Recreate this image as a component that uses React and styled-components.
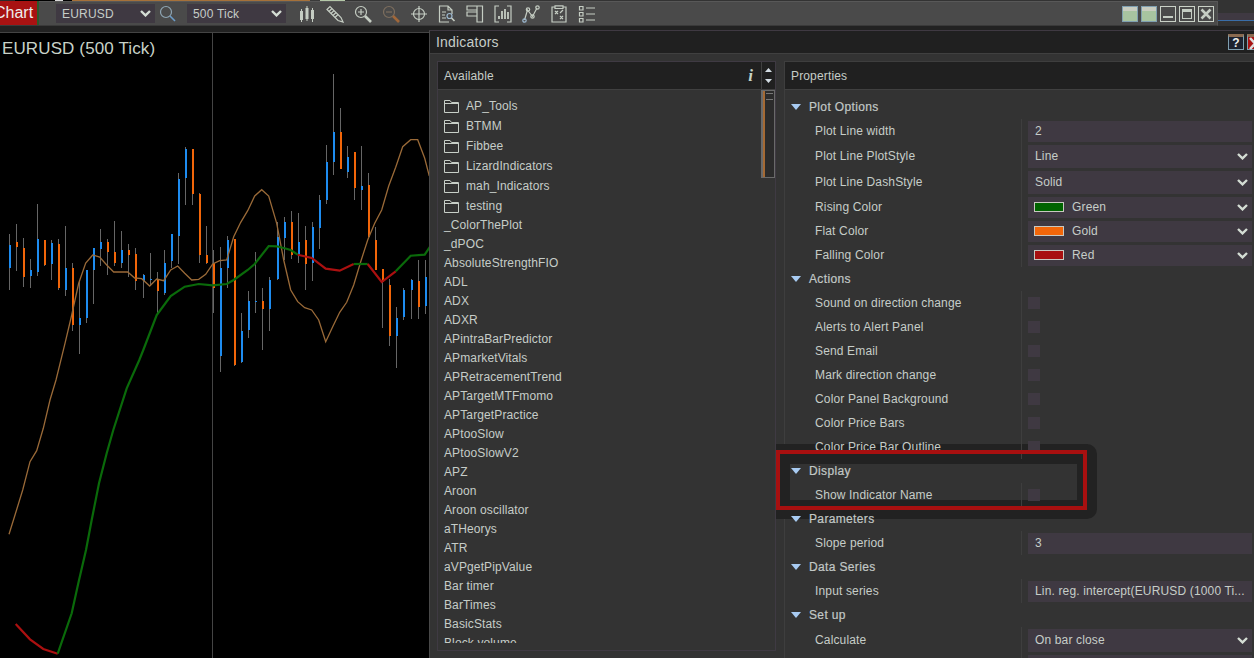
import React from 'react';
import styled, { createGlobalStyle } from 'styled-components';

const GlobalStyle = createGlobalStyle`
  html, body {
    margin: 0;
    padding: 0;
    height: 100%;
    background: #000;
    overflow: hidden;
  }
  body, button {
    font-family: 'Liberation Sans', Arial, sans-serif;
  }
`;

const TEXT = '#c6cdc8';
const FIELD = '#3f3942';
const LINE = '#3e3e3e';
const ICON = '#c5cdc3';

// numbers below were read off a 3x crop, so x is px*3 and y is (px-80)*3
const px = ([x, y]) => `${(x / 3).toFixed(1)},${(80 + y / 3).toFixed(1)}`;
const pts = list => list.map(px).join(' ');

const BLUE = '#1e8cf0';
const ORANGE = '#f26609';

const bars = [
  [26, 462, 630, 495, 564, BLUE],
  [47, 432, 573, 486, 501, ORANGE],
  [68, 474, 621, 504, 591, ORANGE],
  [89, 537, 624, 570, 588, BLUE],
  [110, 372, 588, 477, 576, BLUE],
  [131, 480, 558, 480, 555, ORANGE],
  [152, 480, 600, 489, 552, BLUE],
  [173, 477, 630, 492, 624, ORANGE],
  [194, 438, 648, 564, 630, BLUE],
  [215, 549, 753, 564, 735, ORANGE],
  [236, 600, 822, 714, 735, BLUE],
  [257, 570, 729, 570, 714, BLUE],
  [278, 504, 672, 504, 570, BLUE],
  [299, 447, 558, 486, 507, BLUE],
  [320, 477, 585, 486, 516, ORANGE],
  [341, 423, 558, 516, 549, ORANGE],
  [362, 453, 564, 510, 549, BLUE],
  [383, 492, 591, 510, 525, ORANGE],
  [404, 504, 630, 522, 603, ORANGE],
  [428, 582, 654, 585, 603, BLUE],
  [449, 519, 618, 597, 600, BLUE],
  [470, 576, 702, 597, 633, ORANGE],
  [491, 510, 645, 549, 639, BLUE],
  [512, 462, 564, 462, 543, BLUE],
  [533, 279, 552, 297, 468, BLUE],
  [554, 201, 375, 207, 294, BLUE],
  [575, 207, 375, 207, 342, ORANGE],
  [596, 339, 549, 342, 525, ORANGE],
  [617, 438, 552, 525, 549, ORANGE],
  [638, 510, 699, 549, 624, ORANGE],
  [659, 501, 876, 564, 828, BLUE],
  [680, 468, 624, 480, 564, BLUE],
  [701, 477, 858, 477, 855, ORANGE],
  [722, 699, 849, 753, 846, BLUE],
  [743, 633, 774, 663, 750, BLUE],
  [764, 516, 699, 663, 666, BLUE],
  [785, 624, 810, 663, 687, ORANGE],
  [806, 591, 753, 600, 687, BLUE],
  [830, 426, 600, 471, 597, BLUE],
  [851, 411, 540, 426, 474, BLUE],
  [872, 393, 537, 426, 525, ORANGE],
  [893, 399, 549, 486, 525, BLUE],
  [914, 438, 630, 480, 552, ORANGE],
  [935, 426, 603, 441, 549, BLUE],
  [956, 345, 507, 360, 444, BLUE],
  [977, 195, 372, 246, 360, BLUE],
  [998, -18, 285, 156, 246, BLUE],
  [1019, 84, 267, 156, 267, ORANGE],
  [1040, 198, 294, 231, 276, BLUE],
  [1061, 216, 360, 216, 324, ORANGE],
  [1082, 198, 390, 318, 330, BLUE],
  [1103, 279, 471, 315, 471, ORANGE],
  [1124, 441, 570, 480, 570, ORANGE],
  [1145, 570, 744, 567, 606, ORANGE],
  [1166, 597, 798, 615, 768, ORANGE],
  [1187, 681, 864, 714, 768, BLUE],
  [1208, 624, 720, 630, 711, BLUE],
  [1232, 597, 717, 600, 630, BLUE],
  [1253, 540, 717, 603, 681, ORANGE],
  [1274, 540, 702, 591, 678, BLUE],
];

const slowLine = [
  [27, 1363], [45, 1305], [68, 1230], [90, 1145], [110, 1112], [130, 1045],
  [150, 960], [168, 900], [195, 790], [215, 705], [236, 610], [257, 549],
  [278, 525], [299, 531], [320, 555], [341, 576], [383, 576], [404, 594],
  [425, 596], [449, 618], [470, 597], [491, 602], [512, 570], [533, 558],
  [554, 580], [575, 600], [596, 598], [617, 583], [638, 552], [659, 542],
  [680, 540], [701, 470], [722, 427], [743, 392], [764, 348], [785, 329],
  [806, 348], [830, 430], [851, 540], [872, 630], [893, 665], [914, 683],
  [935, 690], [956, 720], [977, 785], [998, 740], [1019, 697], [1040, 667],
  [1061, 615], [1082, 545], [1103, 480], [1124, 430], [1145, 390], [1166, 318],
  [1187, 262], [1208, 200], [1232, 179], [1253, 179], [1274, 235], [1288, 288],
];

const RED_LINE = '#ab1010';
const GREEN_LINE = '#0a6a0a';

const slopeSegments = [
  [RED_LINE, [[47, 1632], [90, 1678], [130, 1707], [173, 1721]]],
  [GREEN_LINE, [
    [173, 1721], [215, 1600], [235, 1510], [258, 1410], [275, 1320], [297, 1210],
    [320, 1120], [340, 1050], [380, 925], [418, 840], [430, 810], [470, 705],
    [512, 648], [554, 620], [596, 612], [638, 616], [680, 612], [701, 600],
    [743, 570], [764, 552], [806, 498], [830, 499], [851, 504], [872, 510], [893, 524],
  ]],
  [RED_LINE, [[893, 524], [935, 534], [977, 566], [1019, 572], [1061, 552]]],
  [GREEN_LINE, [[1061, 552], [1103, 552]]],
  [RED_LINE, [[1103, 552], [1145, 606], [1187, 574]]],
  [GREEN_LINE, [[1187, 574], [1232, 527], [1274, 524], [1290, 500]]],
];

const Page = styled.div`
  width: 1254px;
  height: 658px;
  overflow: hidden;
  position: relative;
  display: flex;
  flex-direction: column;
  background: #000;
`;

const TopStrip = styled.div`
  height: 1px;
  flex: none;
  background: linear-gradient(
    to right,
    #2a2a2a 0 15px,
    #000 15px 55px,
    #d8d8d8 55px 63px,
    #000 63px 72px,
    #a5713a 72px 310px,
    #3a3a3a 310px 320px,
    #b4c8a8 320px 345px,
    #333 345px
  );
`;

const Header = styled.div`
  display: flex;
  height: 25px;
  flex: none;
`;

const Toolbar = styled.div`
  width: 1218px;
  flex: none;
  box-sizing: border-box;
  display: flex;
  align-items: center;
  padding-right: 3px;
  background: #4a4a4a;
  border-top: 1px solid #585858;
  border-bottom: 1px solid #3a3a3a;
  border-right: 1px solid #555;
`;

const HeaderStub = styled.div`
  flex: 1;
  background: #333;
  padding-top: 12px;
`;

const StubBand = styled.div`
  height: 7px;
  background: ${FIELD};
  border-bottom: 1px solid #3a6ea8;
`;

const ChartTab = styled.div`
  width: 37px;
  height: 24px;
  margin-top: -1px;
  flex: none;
  overflow: hidden;
  background: #a81212;
  color: #eee;
  font-size: 16px;
  line-height: 24px;
  text-indent: -6px;
  white-space: nowrap;
  border-right: 2px solid #2a5a2a;
`;

const ToolSelect = styled.div`
  width: 99px;
  height: 19px;
  flex: none;
  box-sizing: border-box;
  display: flex;
  align-items: center;
  justify-content: space-between;
  margin-left: ${p => p.$ml || 0}px;
  padding: 0 4px 0 6px;
  background: ${FIELD};
  color: ${TEXT};
  font-size: 12px;
  letter-spacing: 0.2px;
`;

const SearchBox = styled.svg`
  width: 18px;
  height: 18px;
  flex: none;
  margin-left: 4px;
`;

const ToolIcons = styled.div`
  display: flex;
  gap: 10px;
  margin-left: 12px;
`;

const ToolIcon = styled.svg`
  width: 18px;
  height: 18px;
  display: block;
  fill: none;
  stroke: ${p => p.$dim ? '#7d6e5e' : ICON};
  stroke-width: 1.2;
`;

const WindowButtons = styled.div`
  display: flex;
  gap: 3px;
  margin-left: auto;
`;

const WindowButton = styled.div`
  width: 16px;
  height: 16px;
  box-sizing: border-box;
  border: 1px solid ${p => p.$filled ? '#7f9fb0' : '#c9d0c6'};
  background: ${p => p.$filled
    ? 'linear-gradient(to bottom, #c9cdc0 0 4px, #a8c4a0 4px)'
    : '#4a4a4a'};
  display: flex;
  align-items: center;
  justify-content: center;
`;

const Main = styled.div`
  flex: 1;
  min-height: 0;
  display: grid;
  grid-template-columns: 429px 1fr;
`;

const Strip = styled.div`
  height: 4px;
  flex: none;
  background: #222;
`;

const ChartPane = styled.div`
  position: relative;
  background: #000;
  border-top: 2px solid #222;
`;

const ChartTitle = styled.div`
  position: absolute;
  left: 2px;
  top: 7px;
  color: #c8d3c8;
  font-size: 17px;
  line-height: 20px;
  letter-spacing: 0.12px;
  white-space: nowrap;
`;

const ChartSvg = styled.svg`
  display: block;
  width: 429px;
  height: 626px;
`;

const Dialog = styled.div`
  display: flex;
  flex-direction: column;
  min-width: 0;
  background: #333;
  border-left: 1px solid #484848;
  border-top: 1px solid ${FIELD};
  overflow: hidden;
`;

const TitleBar = styled.div`
  height: 22px;
  flex: none;
  display: flex;
  align-items: center;
  justify-content: space-between;
  padding-left: 6px;
  background: #202020;
  border-bottom: 1px solid #404040;
  color: ${TEXT};
  font-size: 14px;
  letter-spacing: 0.2px;
`;

const TitleButtons = styled.div`
  display: flex;
  gap: 3px;
  margin-right: -9px;
`;

const TitleButton = styled.div`
  width: 16px;
  height: 16px;
  box-sizing: border-box;
  border: 1px solid #7f9fb0;
  border-top: 3px solid #8a6a50;
  background: ${p => p.$close ? '#a81212' : '#1c2230'};
  color: #eee;
  font-size: 12px;
  font-weight: bold;
  line-height: 12px;
  letter-spacing: 0;
  text-align: center;
`;

const Columns = styled.div`
  flex: 1;
  min-height: 0;
  display: grid;
  grid-template-columns: 339px 1fr;
  gap: 8px;
  align-items: start;
  padding: 7px 0 0 7px;
`;

const Panel = styled.div`
  height: ${p => p.$h}px;
  box-sizing: border-box;
  overflow: hidden;
  display: flex;
  flex-direction: column;
  border: 1px solid ${LINE};
  border-right-width: ${p => p.$open ? 0 : 1}px;
  border-color: ${p => p.$open ? LINE : '#3f3a43'};
`;

const PanelHead = styled.div`
  height: 27px;
  flex: none;
  box-sizing: content-box;
  display: flex;
  align-items: stretch;
  background: #202020;
  border-bottom: 1px solid #404040;
  color: ${TEXT};
  font-size: 12px;
  letter-spacing: 0.15px;
`;

const HeadLabel = styled.div`
  flex: 1;
  display: flex;
  align-items: center;
  justify-content: space-between;
  padding: 0 8px 0 6px;
`;

const InfoMark = styled.span`
  font-family: 'Liberation Serif', serif;
  font-style: italic;
  font-weight: bold;
  font-size: 17px;
  color: #c6d4c6;
`;

const ScrollArrows = styled.div`
  width: 13px;
  flex: none;
  display: flex;
  flex-direction: column;
  align-items: center;
  justify-content: space-between;
  padding: 6px 0;
  border-left: 1px solid #404040;
`;

const Arrow = styled.svg`
  width: 7px;
  height: 4px;
  display: block;
  fill: #d4dde4;
`;

const ListWrap = styled.div`
  flex: 1;
  display: flex;
  min-height: 0;
`;

const List = styled.div`
  flex: 1;
  height: 553px;
  overflow: hidden;
  padding: 6px 0 0 6px;
  box-sizing: border-box;
  margin-bottom: 6px;
  color: ${TEXT};
  font-size: 12px;
  letter-spacing: 0.12px;
`;

const FolderRow = styled.div`
  height: 20px;
  display: flex;
  align-items: center;
  gap: 7px;
  white-space: nowrap;
`;

const ItemRow = styled.div`
  height: 19px;
  line-height: 19px;
  white-space: nowrap;
`;

const FolderIcon = styled.svg`
  width: 15px;
  height: 13px;
  flex: none;
  fill: none;
  stroke: #c8cfc8;
  stroke-width: 1;
`;

const ScrollTrack = styled.div`
  width: 14px;
  flex: none;
`;

const ScrollThumb = styled.div`
  height: 88px;
  box-sizing: border-box;
  position: relative;
  border: 1px solid #6a6a6a;
  border-left-width: 2px;
  background: #2b2b2b;

  &::before {
    content: '';
    position: absolute;
    left: 0;
    top: 0;
    bottom: 0;
    width: 2px;
    background: #a56a34;
  }
  &::after {
    content: '';
    position: absolute;
    left: 3px;
    right: 1px;
    top: 2px;
    height: 5px;
    border-top: 1px solid #777;
    border-bottom: 1px solid #777;
  }
`;

const PropBody = styled.div`
  flex: 1;
  padding-top: 5px;
  color: ${TEXT};
  font-size: 12px;
  letter-spacing: 0.15px;
`;

const SectionRow = styled.div`
  position: relative;
  z-index: 2;
  height: 24px;
  display: flex;
  align-items: center;
  gap: 8px;
  padding-left: 6px;
  letter-spacing: 0.35px;
  -webkit-text-stroke: 0.2px #c2c8c6;
  color: #c2c8c6;
`;

const SectionArrow = styled.svg`
  width: 10px;
  height: 6px;
  flex: none;
  fill: #a8cbf2;
`;

const Row = styled.div`
  position: relative;
  z-index: 2;
  height: ${p => p.$h || 24}px;
  display: grid;
  grid-template-columns: 236px 1fr;
`;

const NameCell = styled.div`
  display: flex;
  align-items: center;
  padding-left: 30px;
  white-space: nowrap;
`;

const ValueCell = styled.div`
  display: flex;
  align-items: center;
  padding: 0 2px 0 6px;
  border-left: 1px solid ${LINE};
`;

const Field = styled.div`
  flex: 1;
  min-width: 0;
  height: ${p => p.$h || 21}px;
  box-sizing: border-box;
  display: flex;
  align-items: center;
  justify-content: space-between;
  padding: 0 4px 0 7px;
  background: ${FIELD};
  white-space: nowrap;
`;

const FieldLabel = styled.span`
  display: flex;
  align-items: center;
  gap: 8px;
`;

const Swatch = styled.span`
  width: 30px;
  height: 10px;
  margin-left: -1px;
  box-sizing: border-box;
  border: 1px solid #c8c8c0;
  background: ${p => p.$color};
`;

const CheckBox = styled.div`
  width: 12px;
  height: 12px;
  background: ${FIELD};
`;

const ChevronSvg = styled.svg`
  width: 11px;
  height: 7px;
  flex: none;
  fill: none;
  stroke: #d4ddd4;
  stroke-width: 2.4;
`;

// the dark glow of the annotation sits behind the property texts, its red frame in front
const Halo = styled.div`
  position: absolute;
  z-index: 1;
  left: 776px;
  top: 444px;
  width: 321px;
  height: 75px;
  box-sizing: border-box;
  border-style: solid;
  border-color: #222;
  border-width: 20px 20px 19px 14px;
  border-radius: 0 10px 10px 0;
  pointer-events: none;
`;

const Highlight = styled.div`
  position: absolute;
  z-index: 3;
  left: 776px;
  top: 450px;
  width: 311px;
  height: 60px;
  box-sizing: border-box;
  border: 4px solid #a81010;
  pointer-events: none;
`;

const Chevron = () => (
  <ChevronSvg viewBox="0 0 11 7">
    <polyline points="1,1 5.5,5.4 10,1" />
  </ChevronSvg>
);

const Folder = () => (
  <FolderIcon viewBox="0 0 15 13">
    <path d="M0.5 12.5V0.5H6L7.5 2.5H14.5V12.5ZM0.5 3.5H14.5" />
  </FolderIcon>
);

const toolIcons = [
  <ToolIcon key="bars" viewBox="0 0 18 18">
    <g fill={ICON} stroke="none">
      <rect x="2" y="6" width="3" height="9" />
      <rect x="3" y="4" width="1" height="13" />
      <rect x="7.5" y="3" width="3" height="11" />
      <rect x="8.5" y="1" width="1" height="15" />
      <rect x="13" y="5" width="3" height="9" />
      <rect x="14" y="3" width="1" height="14" />
    </g>
  </ToolIcon>,
  <ToolIcon key="pencil" viewBox="0 0 18 18">
    <path d="M1 4.5 4 1.5 15 12.5 17 17 12 15.5Z" />
    <path d="M3 6.5 6 3.5M5 8.5 8 5.5M7 10.5 10 7.5M9 12.5 12 9.5" />
  </ToolIcon>,
  <ToolIcon key="zoom-in" viewBox="0 0 18 18">
    <circle cx="7" cy="7" r="5.5" />
    <path d="M4 7H10M7 4V10" />
    <path d="M11 11 17 17" strokeWidth="2.6" />
  </ToolIcon>,
  <ToolIcon key="zoom-out" viewBox="0 0 18 18" $dim>
    <circle cx="7" cy="7" r="5.5" />
    <path d="M4 7H10" />
    <path d="M11 11 17 17" strokeWidth="2.6" stroke="#a0673a" />
  </ToolIcon>,
  <ToolIcon key="cross" viewBox="0 0 18 18">
    <circle cx="9" cy="9" r="5.5" />
    <path d="M9 1V17M1 9H17" />
  </ToolIcon>,
  <ToolIcon key="report" viewBox="0 0 18 18">
    <path d="M11 17H1.5V1H10L14 5V9M10 1V5H14" />
    <path d="M4 7H8M4 10H7M4 13H8" />
    <circle cx="11.5" cy="11" r="2.5" stroke="#9cb8d0" />
    <path d="M13.5 13 16.5 16" strokeWidth="1.6" />
  </ToolIcon>,
  <ToolIcon key="panels" viewBox="0 0 18 18">
    <path d="M11 1H16.5V17H11ZM1 1H11V5H1ZM1 7H11V11H1Z" />
  </ToolIcon>,
  <ToolIcon key="bracket" viewBox="0 0 18 18">
    <path d="M5 1H1V17H5M13 1H17V17H13" />
    <path d="M5 11V14M8 6V14M11 4V14M14 7V14" strokeWidth="1.8" />
  </ToolIcon>,
  <ToolIcon key="nodes" viewBox="0 0 18 18">
    <path d="M2.5 15 5.5 5 10.5 11.5 15 3" />
    <circle cx="2.5" cy="15.5" r="1.7" stroke="#9cb8d0" />
    <circle cx="6" cy="4.5" r="1.7" />
    <circle cx="10.5" cy="11.5" r="1.7" />
    <circle cx="15.5" cy="2.5" r="1.7" />
  </ToolIcon>,
  <ToolIcon key="clip" viewBox="0 0 18 18">
    <path d="M5 2H2V17H16V2H13M5 0.8H13V3.5H5Z" />
    <path d="M5 6 8 9M8 6 5 9M10 11 13 14M13 11 10 14M10 8 13 5" />
  </ToolIcon>,
  <ToolIcon key="list" viewBox="0 0 18 18">
    <path d="M1.5 1.5H5V5H1.5ZM1.5 7.5H5V11H1.5ZM1.5 13.5H5V17H1.5ZM8 3H17M8 9H17M8 15H17" />
  </ToolIcon>,
];

const folders = ['AP_Tools', 'BTMM', 'Fibbee', 'LizardIndicators', 'mah_Indicators', 'testing'];

const indicators = [
  '_ColorThePlot', '_dPOC', 'AbsoluteStrengthFIO', 'ADL', 'ADX', 'ADXR',
  'APintraBarPredictor', 'APmarketVitals', 'APRetracementTrend', 'APTargetMTFmomo',
  'APTargetPractice', 'APtooSlow', 'APtooSlowV2', 'APZ', 'Aroon', 'Aroon oscillator',
  'aTHeorys', 'ATR', 'aVPgetPipValue', 'Bar timer', 'BarTimes', 'BasicStats', 'Block volume',
];

const sections = [
  {
    title: 'Plot Options',
    rows: [
      { name: 'Plot Line width', text: '2' },
      { name: 'Plot Line PlotStyle', select: 'Line' },
      { name: 'Plot Line DashStyle', select: 'Solid' },
      { name: 'Rising Color', color: '#006400', select: 'Green' },
      { name: 'Flat Color', color: '#f26609', select: 'Gold' },
      { name: 'Falling Color', color: '#a81010', select: 'Red' },
    ],
  },
  {
    title: 'Actions',
    rows: [
      { name: 'Sound on direction change', check: true },
      { name: 'Alerts to Alert Panel', check: true },
      { name: 'Send Email', check: true },
      { name: 'Mark direction change', check: true },
      { name: 'Color Panel Background', check: true },
      { name: 'Color Price Bars', check: true },
      { name: 'Color Price Bar Outline', check: true },
    ],
  },
  { title: 'Display', rows: [{ name: 'Show Indicator Name', check: true }] },
  { title: 'Parameters', rows: [{ name: 'Slope period', text: '3' }] },
  { title: 'Data Series', rows: [{ name: 'Input series', text: 'Lin. reg. intercept(EURUSD (1000 Ti...' }] },
  {
    title: 'Set up',
    rows: [
      { name: 'Calculate', select: 'On bar close' },
      { name: '', select: ' ' },
    ],
  },
];

const PropRow = ({ name, text, select, color, check }) => {
  const plainSelect = select && !color;
  return (
    <Row $h={plainSelect ? 26 : 24}>
      <NameCell>{name}</NameCell>
      <ValueCell>
        {check && <CheckBox />}
        {text && <Field>{text}</Field>}
        {select && (
          <Field $h={plainSelect ? 23 : 21}>
            <FieldLabel>
              {color && <Swatch $color={color} />}
              {select}
            </FieldLabel>
            <Chevron />
          </Field>
        )}
      </ValueCell>
    </Row>
  );
};

const PriceChart = () => (
  <ChartSvg viewBox="0 32 429 626">
    <g shapeRendering="crispEdges">
      <rect x="0" y="32" width="429" height="1" fill="#444" />
      <rect x="212" y="32" width="1" height="626" fill="#444" />
      {bars.map(([x, wickTop, wickBottom, bodyTop, bodyBottom, fill]) => {
        const bx = Math.round(x / 3);
        return (
          <g key={x}>
            <rect x={bx} y={80 + wickTop / 3} width="1" height={(wickBottom - wickTop) / 3} fill="#666" />
            <rect x={bx} y={80 + bodyTop / 3} width="2" height={Math.max(1, (bodyBottom - bodyTop) / 3)} fill={fill} />
          </g>
        );
      })}
    </g>
    <polyline points={pts(slowLine)} fill="none" stroke="#9a6a38" strokeWidth="1.3" />
    {slopeSegments.map(([stroke, line], i) => (
      <polyline key={i} points={pts(line)} fill="none" stroke={stroke} strokeWidth="2.2" />
    ))}
  </ChartSvg>
);

export default function App() {
  return (
    <Page>
      <GlobalStyle />
      <TopStrip />
      <Header>
        <Toolbar>
          <ChartTab>Chart</ChartTab>
          <ToolSelect $ml={17}>
            EURUSD
            <Chevron />
          </ToolSelect>
          <SearchBox viewBox="0 0 18 18" fill="none">
            <circle cx="7" cy="7" r="5.5" stroke="#8fa6b4" strokeWidth="1.2" />
            <path d="M11 11 16 16" stroke="#6c9cc8" strokeWidth="1.6" />
          </SearchBox>
          <ToolSelect $ml={10}>
            500 Tick
            <Chevron />
          </ToolSelect>
          <ToolIcons>{toolIcons}</ToolIcons>
          <WindowButtons>
            <WindowButton $filled />
            <WindowButton $filled />
            <WindowButton>
              <svg width="10" height="10" viewBox="0 0 10 10">
                <rect x="0" y="7" width="10" height="2" fill={ICON} />
              </svg>
            </WindowButton>
            <WindowButton>
              <svg width="12" height="12" viewBox="0 0 12 12" fill="none" stroke={ICON}>
                <rect x="1.5" y="1.5" width="9" height="9" />
                <path d="M1.5 3H10.5" strokeWidth="2" />
              </svg>
            </WindowButton>
            <WindowButton>
              <svg width="12" height="12" viewBox="0 0 12 12" fill="none" stroke={ICON} strokeWidth="2.6">
                <path d="M1.5 1.5 10.5 10.5M10.5 1.5 1.5 10.5" />
              </svg>
            </WindowButton>
          </WindowButtons>
        </Toolbar>
        <HeaderStub>
          <StubBand />
        </HeaderStub>
      </Header>
      <Strip />
      <Main>
        <ChartPane>
          <PriceChart />
          <ChartTitle>EURUSD (500 Tick)</ChartTitle>
        </ChartPane>
        <Dialog>
          <TitleBar>
            Indicators
            <TitleButtons>
              <TitleButton>?</TitleButton>
              <TitleButton $close>
                <svg width="14" height="13" viewBox="0 0 14 13" fill="none" stroke="#ddd" strokeWidth="2.6">
                  <path d="M2 1 12 12M12 1 2 12" />
                </svg>
              </TitleButton>
            </TitleButtons>
          </TitleBar>
          <Columns>
            <Panel $h={590}>
              <PanelHead>
                <HeadLabel>
                  Available
                  <InfoMark>i</InfoMark>
                </HeadLabel>
                <ScrollArrows>
                  <Arrow viewBox="0 0 7 4"><polygon points="3.5,0 7,4 0,4" /></Arrow>
                  <Arrow viewBox="0 0 7 4"><polygon points="0,0 7,0 3.5,4" /></Arrow>
                </ScrollArrows>
              </PanelHead>
              <ListWrap>
                <List>
                  {folders.map(name => (
                    <FolderRow key={name}>
                      <Folder />
                      {name}
                    </FolderRow>
                  ))}
                  {indicators.map(name => (
                    <ItemRow key={name}>{name}</ItemRow>
                  ))}
                </List>
                <ScrollTrack>
                  <ScrollThumb />
                </ScrollTrack>
              </ListWrap>
            </Panel>
            <Panel $h={600} $open>
              <PanelHead>
                <HeadLabel>Properties</HeadLabel>
              </PanelHead>
              <PropBody>
                {sections.map(section => (
                  <div key={section.title}>
                    <SectionRow>
                      <SectionArrow viewBox="0 0 10 6"><polygon points="0,0 10,0 5,6" /></SectionArrow>
                      {section.title}
                    </SectionRow>
                    {section.rows.map((row, i) => (
                      <PropRow key={i} {...row} />
                    ))}
                  </div>
                ))}
              </PropBody>
            </Panel>
          </Columns>
        </Dialog>
      </Main>
      <Halo />
      <Highlight />
    </Page>
  );
}
